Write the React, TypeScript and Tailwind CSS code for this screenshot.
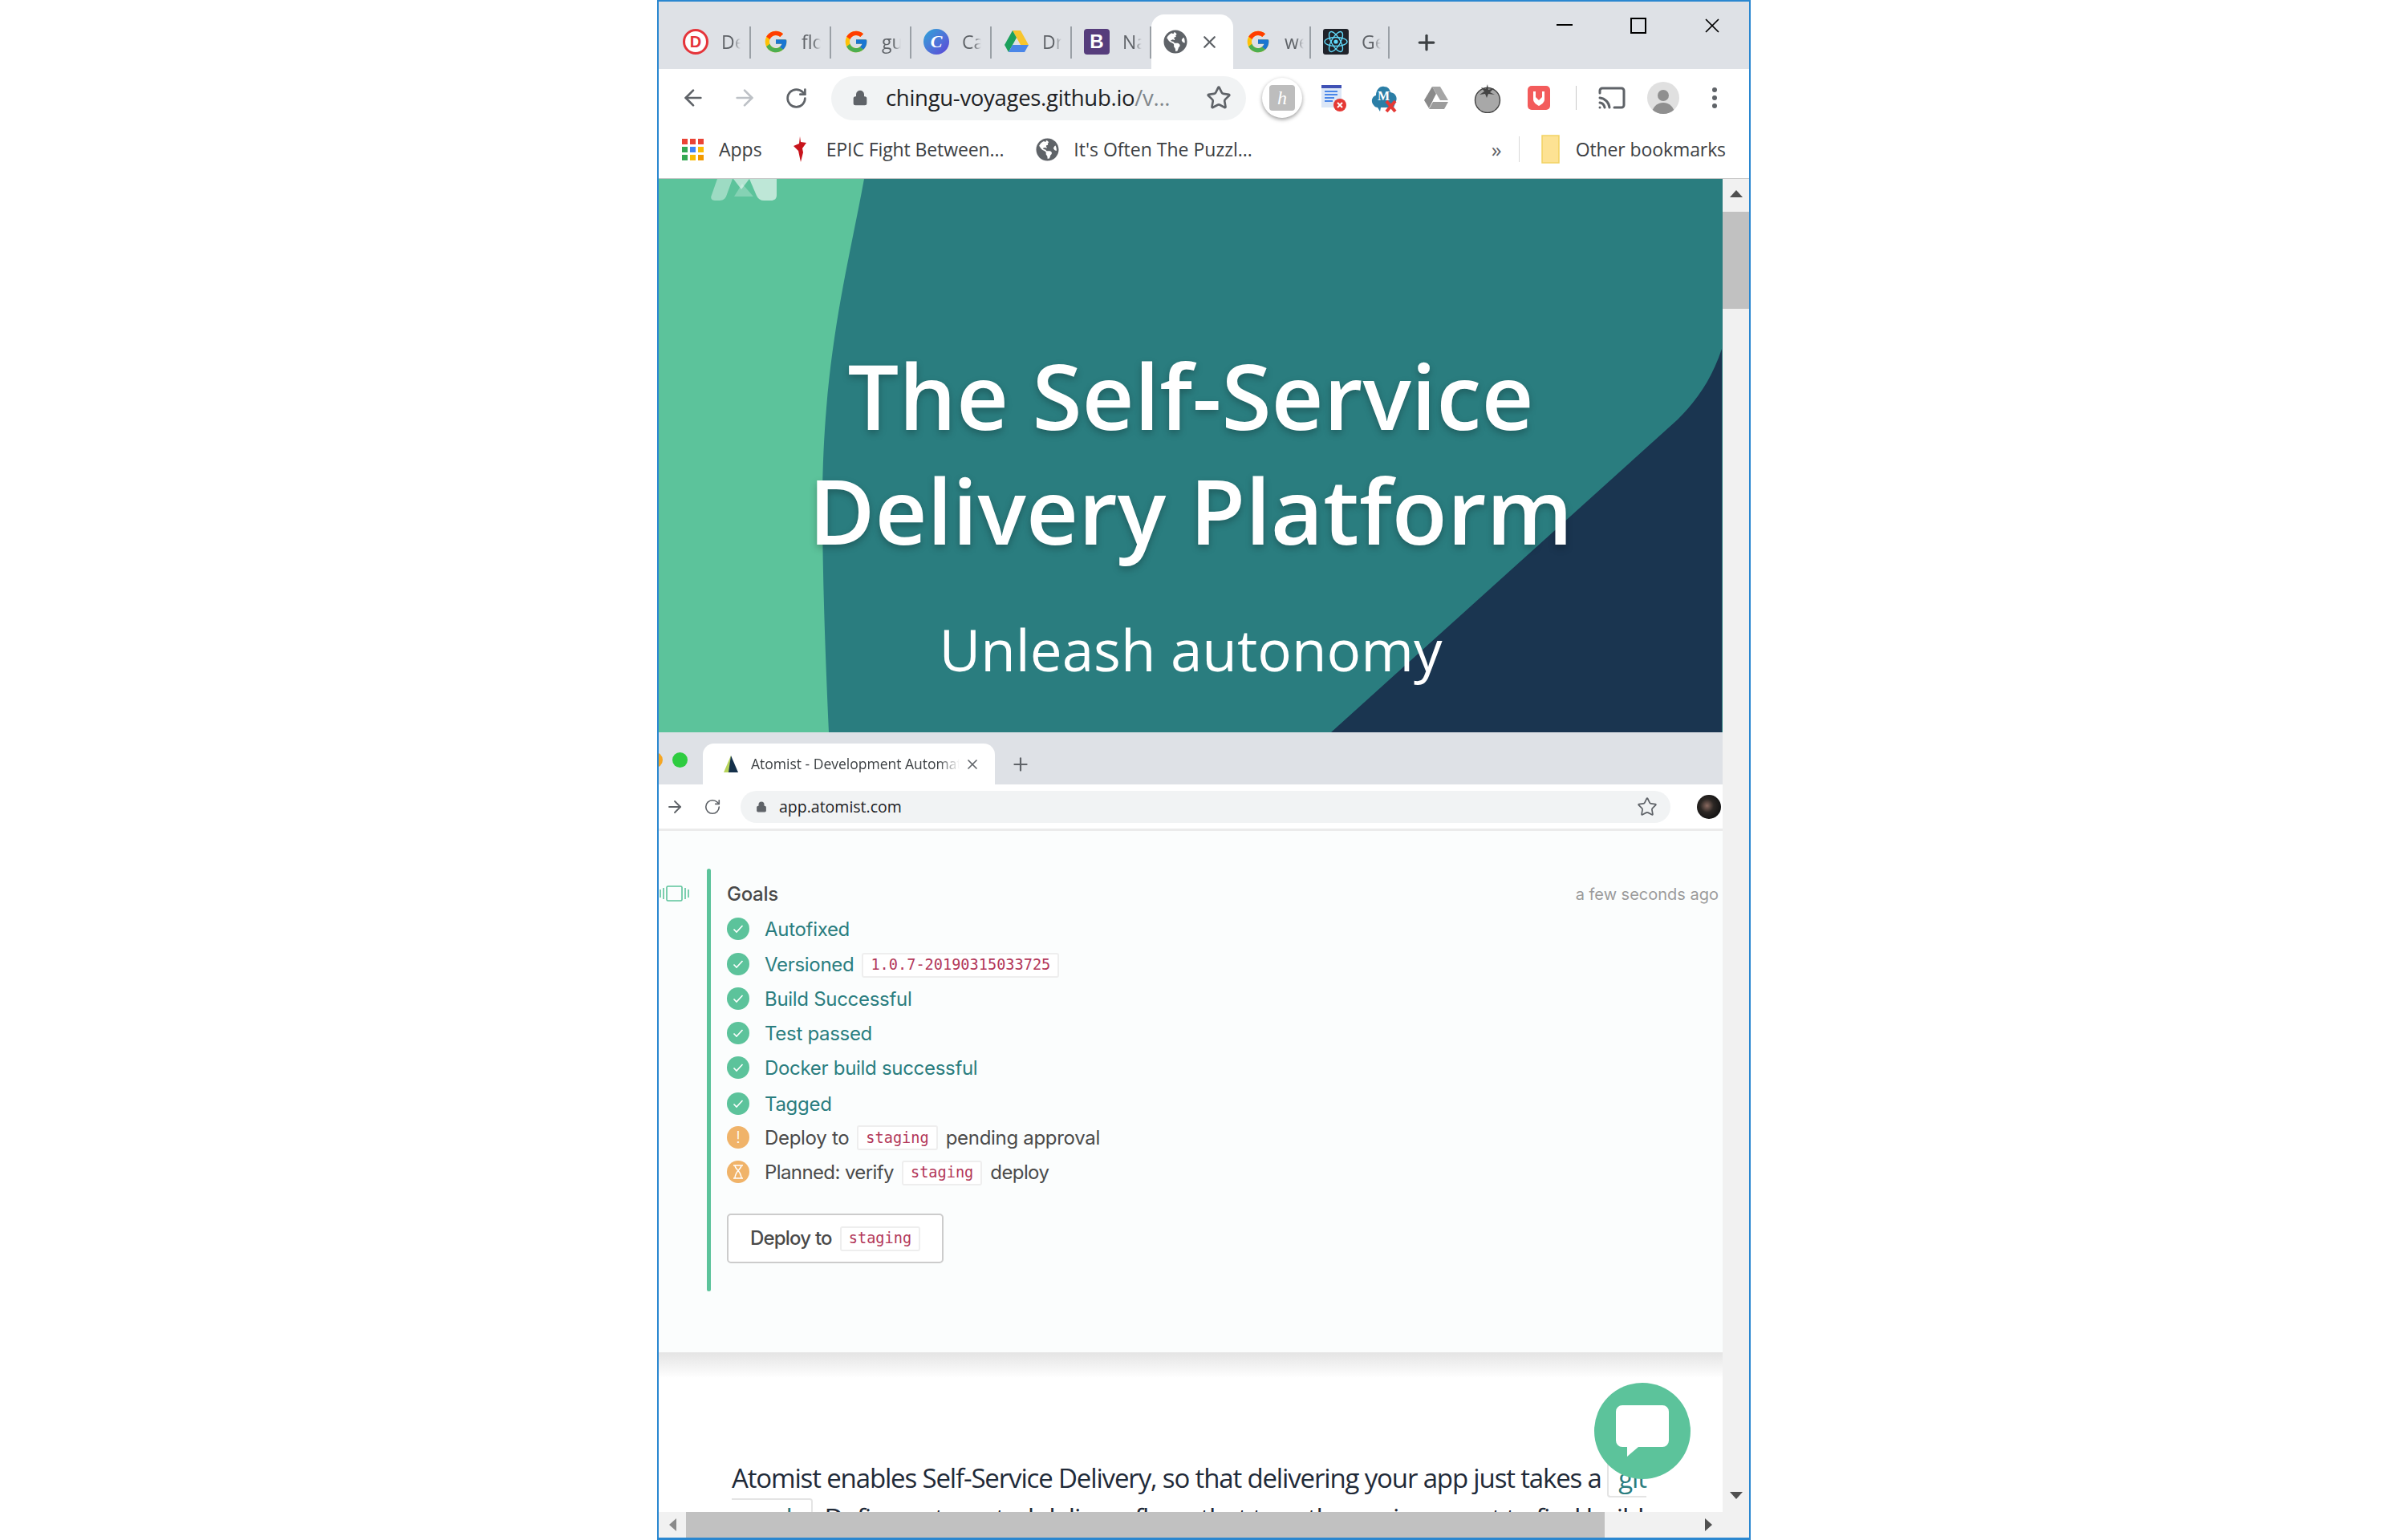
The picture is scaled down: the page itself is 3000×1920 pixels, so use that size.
import { ArrowLeft, ArrowRight, Cast, Lock, Plus, RotateCw, Star, X } from 'lucide-react'
import { FaGlobeAmericas } from 'react-icons/fa'
import { FcGoogle } from 'react-icons/fc'

function Drive({ size = 32 }: { size?: number }) {
    return (
        <svg width={size} height={size} viewBox="0 0 32 32">
            <path d="M11 2h10l10 18H21z" fill="#f7c52d" />
            <path d="M11 2l5 9-10 18-5-9z" fill="#1ba05b" />
            <path d="M6 29l5-9h20l-5 9z" fill="#4a86e8" />
        </svg>
    )
}

function ReactIcon() {
    return (
        <svg width="32" height="32" viewBox="0 0 32 32">
            <rect width="32" height="32" rx="3" fill="#20232a" />
            <g fill="none" stroke="#61dafb" strokeWidth="1.4">
                <ellipse cx="16" cy="16" rx="14" ry="5.5" />
                <ellipse cx="16" cy="16" rx="14" ry="5.5" transform="rotate(60 16 16)" />
                <ellipse cx="16" cy="16" rx="14" ry="5.5" transform="rotate(120 16 16)" />
            </g>
            <circle cx="16" cy="16" r="2.6" fill="#61dafb" />
        </svg>
    )
}

function DealIcon() {
    return (
        <div className="flex h-8 w-8 items-center justify-center rounded-full border-[3px] border-[#e5343a] bg-white font-['Liberation_Sans',sans-serif] text-[20px] font-bold leading-none text-[#e5343a]">
            D
        </div>
    )
}

function CanvaIcon() {
    return (
        <div className="flex h-8 w-8 items-center justify-center rounded-full bg-gradient-to-br from-[#20a4d8] to-[#5a3fd6] font-['Liberation_Serif',serif] text-[22px] font-bold italic leading-none text-white">
            C
        </div>
    )
}

function BootstrapIcon() {
    return (
        <div className="flex h-8 w-8 items-center justify-center rounded-[4px] bg-[#563d7c] font-['Liberation_Sans',sans-serif] text-[24px] font-bold leading-none text-white">
            B
        </div>
    )
}

const tabs = [
    { icon: <DealIcon />, label: 'Deal', w: 'w-[100px]', gap: 'ml-[16px]' },
    { icon: <FcGoogle size={32} />, label: 'flow', w: 'w-[100px]', gap: 'ml-[16px]' },
    { icon: <FcGoogle size={32} />, label: 'guide', w: 'w-[100px]', gap: 'ml-[16px]' },
    { icon: <CanvaIcon />, label: 'Canva', w: 'w-[100px]', gap: 'ml-[16px]' },
    { icon: <Drive />, label: 'Drive', w: 'w-[100px]', gap: 'ml-[16px]' },
    { icon: <BootstrapIcon />, label: 'Navbar', w: 'w-[99px]', gap: 'ml-[16px]' },
]

function Tab({ icon, label, w, gap }: { icon: React.ReactNode; label: string; w: string; gap: string }) {
    return (
        <div className={`flex h-full shrink-0 items-center pl-[15px] ${w} relative`}>
            {icon}
            <span className={`${gap} w-[24px] overflow-hidden whitespace-nowrap text-[23px] text-[#5f6368] [mask-image:linear-gradient(to_right,black_60%,transparent)]`}>{label}</span>
            <div className="absolute right-0 top-[15px] h-[40px] w-[2px] bg-[#9aa0a6]" />
        </div>
    )
}

function Slot({ children }: { children: React.ReactNode }) {
    return <div className="flex h-full w-[64px] shrink-0 items-center justify-center">{children}</div>
}

function Code({ children }: { children: React.ReactNode }) {
    return (
        <code className="mx-[10px] inline-flex h-[31px] items-center rounded-[3px] border-2 border-[#eeeeee] bg-white px-[9px] font-['DejaVu_Sans_Mono',monospace] text-[18.6px] font-normal tracking-normal text-[#b3385a]">
            {children}
        </code>
    )
}

function Status({ kind }: { kind: 'ok' | 'warn' | 'wait' }) {
    const bg = kind === 'ok' ? 'bg-[#5cc39b]' : 'bg-[#f0b369]'
    return (
        <div className={`mr-[19px] flex h-[28px] w-[28px] shrink-0 -translate-y-[1px] items-center justify-center rounded-full text-white ${bg}`}>
            {kind === 'ok' && (
                <svg width="16" height="16" viewBox="0 0 16 16" fill="none" stroke="white" strokeWidth="1.6">
                    <path d="M2.5 8.5l3.5 3.5 7.5-8" />
                </svg>
            )}
            {kind === 'warn' && <span className="text-[20px] font-light leading-none">!</span>}
            {kind === 'wait' && (
                <svg width="14" height="18" viewBox="0 0 14 18" fill="none" stroke="white" strokeWidth="1.5">
                    <path d="M1 1h12M1 17h12M3 1c0 5 8 7 8 16M11 1c0 5-8 7-8 16" />
                </svg>
            )}
        </div>
    )
}

const goals = [
    { h: 'h-[44px]', label: 'Autofixed' },
    { h: 'h-[44px]', label: 'Versioned', code: '1.0.7-20190315033725' },
    { h: 'h-[42px]', label: 'Build Successful' },
    { h: 'h-[44px]', label: 'Test passed' },
    { h: 'h-[42px]', label: 'Docker build successful' },
    { h: 'h-[48px]', label: 'Tagged' },
]

export default function App() {
    return (
        <div className="h-[1920px] w-[3000px] overflow-hidden bg-white">
            <div className="relative ml-[819px] flex h-[1920px] w-[1363px] flex-col border-x-[2.5px] border-b-[3px] border-t-[2px] border-[#2a87d0] font-['Open_Sans',sans-serif]">
                {/* tab strip */}
                <div className="flex h-[84px] shrink-0 bg-[#dee1e6] pt-[16px]">
                    <div className="flex h-[68px] pl-[15px]">
                        {tabs.map((t, i) => (
                            <Tab key={i} {...t} />
                        ))}
                        <div className="flex h-full w-[102px] shrink-0 items-center rounded-t-[16px] bg-white pl-[15px] text-[#5f6368]">
                            <FaGlobeAmericas size={30} />
                            <X className="ml-[15px]" size={25} strokeWidth={2.2} />
                        </div>
                        <Tab icon={<FcGoogle size={32} />} label="web" w="w-[97px]" gap="ml-[17px]" />
                        <Tab icon={<ReactIcon />} label="Getting" w="w-[98px]" gap="ml-[16px]" />
                        <Plus className="ml-[31px] mt-[20px] text-[#3c4043]" size={30} strokeWidth={2.6} />
                    </div>
                    <div className="ml-auto flex h-[30px] -translate-y-[16px] items-start text-black">
                        <div className="mt-[28px] h-[2px] w-[20px] bg-black" />
                        <div className="ml-[72px] mt-[20px] h-[20px] w-[20px] border-2 border-black" />
                        <X className="ml-[67px] mr-[31px] mt-[15px]" size={30} strokeWidth={1.4} />
                    </div>
                </div>

                {/* toolbar */}
                <div className="flex h-[72px] shrink-0 items-center bg-white pl-[11px]">
                    <Slot><ArrowLeft size={32} strokeWidth={2} className="text-[#5f6368]" /></Slot>
                    <Slot><ArrowRight size={32} strokeWidth={2} className="text-[#bdc1c6]" /></Slot>
                    <Slot><RotateCw size={29} strokeWidth={2.2} className="text-[#5f6368]" /></Slot>
                    <div className="ml-[12px] flex h-[55px] w-[517px] shrink-0 items-center rounded-full bg-[#f1f3f4] pl-[26px]">
                        <Lock size={20} fill="#5f6368" className="text-[#5f6368]" />
                        <span className="ml-[22px] whitespace-nowrap text-[27.5px] tracking-[-0.3px] text-[#202124]">chingu-voyages.github.io<span className="text-[#80868b]">/v...</span></span>
                        <Star className="ml-auto mr-[18px] text-[#5f6368]" size={32} strokeWidth={2} />
                    </div>
                    <div className="ml-[13px] flex h-full">
                        <Slot>
                            <div className="flex h-[50px] w-[50px] items-center justify-center rounded-full bg-white shadow-[0_2px_5px_rgba(0,0,0,0.4)]">
                                <div className="flex h-[32px] w-[32px] items-center justify-center rounded-[4px] bg-[#bdbdbd] font-['Liberation_Serif',serif] text-[24px] italic leading-none text-white">h</div>
                            </div>
                        </Slot>
                        <Slot>
                            <svg width="32" height="36" viewBox="0 0 32 36">
                                <path d="M1 2h25v28H1z" fill="#dce7f7" />
                                <path d="M1 2h25v4H1z" fill="#3f51b5" />
                                <path d="M5 10h16M5 14h16M5 18h12M5 22h10" stroke="#4a86e8" strokeWidth="2" />
                                <circle cx="24" cy="27" r="8" fill="#e53935" />
                                <path d="M21 24l6 6M27 24l-6 6" stroke="white" strokeWidth="2" />
                            </svg>
                        </Slot>
                        <Slot>
                            <svg width="34" height="42" viewBox="0 0 34 42">
                                <path d="M3 30c-4-4-2-11 3-12 0-7 5-12 10-11 5 0 7 3 8 7 6 1 9 6 7 11l-3 8H12l-1 5-3-5c-2 0-4-1-5-3z" fill="#2b7ea6" />
                                <text x="8" y="24" fill="white" fontSize="16" fontWeight="700" fontFamily="Liberation Serif">M</text>
                                <path d="M19 25l11 13M30 25L19 38" stroke="#e53935" strokeWidth="4" />
                            </svg>
                        </Slot>
                        <Slot>
                            <svg width="32" height="30" viewBox="0 0 32 30">
                                <path d="M11 1h10l10 17H21z" fill="#a5a5a5" />
                                <path d="M11 1l5 9-9 18-6-10z" fill="#8a8a8a" />
                                <path d="M7 29l5-9h19l-5 9z" fill="#9c9c9c" />
                                <path d="M16 11l4 7h-8z" fill="#fff" />
                            </svg>
                        </Slot>
                        <Slot>
                            <svg width="34" height="38" viewBox="0 0 34 38">
                                <circle cx="17" cy="22" r="15.5" fill="#a8a8a8" stroke="#444" strokeWidth="1.4" />
                                <path d="M17 2l1 7 7-2-5 5 6 3-8-1-2 5-2-5-7 1 6-4-4-5 6 2z" fill="#444" />
                            </svg>
                        </Slot>
                        <Slot>
                            <svg width="28" height="30" viewBox="0 0 28 30">
                                <rect width="28" height="30" rx="5" fill="#f35b5b" />
                                <path d="M7 7h14v10c0 3-3 6-7 8-4-2-7-5-7-8z" fill="#fff" />
                                <path d="M10 7h8v7l-4 4-4-4z" fill="#f35b5b" />
                            </svg>
                        </Slot>
                    </div>
                    <div className="ml-[14px] h-[30px] w-[1px] bg-[#c8c8c8]" />
                    <div className="ml-[12px] flex h-full">
                        <Slot><Cast size={36} strokeWidth={2} className="text-[#5f6368]" /></Slot>
                        <Slot>
                            <div className="flex h-[40px] w-[40px] flex-col items-center justify-end overflow-hidden rounded-full bg-[#e0e0e0]">
                                <div className="h-[14px] w-[14px] rounded-full bg-[#8f8f8f]" />
                                <div className="mt-[2px] h-[14px] w-[28px] rounded-t-full bg-[#8f8f8f]" />
                            </div>
                        </Slot>
                        <Slot>
                            <div className="flex flex-col gap-[4px]">
                                <div className="h-[6px] w-[6px] rounded-full bg-[#5f6368]" />
                                <div className="h-[6px] w-[6px] rounded-full bg-[#5f6368]" />
                                <div className="h-[6px] w-[6px] rounded-full bg-[#5f6368]" />
                            </div>
                        </Slot>
                    </div>
                </div>

                {/* bookmarks */}
                <div className="flex h-[65px] shrink-0 items-start border-b border-[#c8c8c8] bg-white pl-[29px] text-[23px] text-[#3c4043]">
                    <div className="flex h-[56px] w-full items-center">
                        <div className="grid w-[27px] grid-cols-3 gap-[3px]">
                            <div className="h-[7px] bg-[#ea4335]" /><div className="h-[7px] bg-[#ea4335]" /><div className="h-[7px] bg-[#ea4335]" />
                            <div className="h-[7px] bg-[#34a853]" /><div className="h-[7px] bg-[#4285f4]" /><div className="h-[7px] bg-[#fbbc05]" />
                            <div className="h-[7px] bg-[#34a853]" /><div className="h-[7px] bg-[#fbbc05]" /><div className="h-[7px] bg-[#f29900]" />
                        </div>
                        <span className="ml-[19px]">Apps</span>
                        <svg className="ml-[38px]" width="18" height="32" viewBox="0 0 18 32">
                            <path d="M9 0l1 7 7 1-5 7 1 5-3 12-3-14-6-6 7-3z" fill="#c8141c" />
                        </svg>
                        <span className="ml-[24px] whitespace-nowrap tracking-[-0.1px]">EPIC Fight Between...</span>
                        <FaGlobeAmericas className="ml-[40px] text-[#5f6368]" size={29} />
                        <span className="ml-[18px] whitespace-nowrap">It's Often The Puzzl...</span>
                        <span className="ml-auto text-[26px] leading-none text-[#5f6368]">»</span>
                        <div className="ml-[21px] h-[32px] w-[1px] bg-[#d8d8d8]" />
                        <svg className="ml-[27px]" width="24" height="36" viewBox="0 0 24 36">
                            <path d="M1 1h21v34H1z" fill="#fde293" stroke="#f2d263" strokeWidth="1.5" />
                        </svg>
                        <span className="ml-[19px] mr-[29px] whitespace-nowrap tracking-[-0.1px]">Other bookmarks</span>
                    </div>
                </div>

                <div className="flex min-h-0 flex-1">
                    {/* page */}
                    <div className="min-w-0 flex-1 overflow-hidden bg-white">
                        {/* hero */}
                        <div className="relative flex h-[690px] flex-col items-center bg-[#2a7d7f] text-white">
                            <svg className="absolute inset-0" width="1325" height="690" viewBox="0 0 1325 690">
                                <path d="M0 0H256C236 110 205 220 204 400C204 500 208 600 212 690H0Z" fill="#5cc39b" />
                                <path d="M1325 212C1312 250 1295 275 1270 300L838 690H1325Z" fill="#1a3550" />
                                <path d="M73 0H92L84 22C82 26 79 27 75 27H70C66 27 64 24 66 20Z" fill="#ffffff" opacity="0.4" />
                                <path d="M93 0H113L103 13Z" fill="#ffffff" opacity="0.55" />
                                <path d="M94 22L104 6L118 22Z" fill="#ffffff" opacity="0.25" />
                                <path d="M113 0H147V20C147 25 144 27 140 27H131C127 27 124 25 122 21Z" fill="#ffffff" opacity="0.6" />
                            </svg>
                            <h1 className="relative mt-[198px] text-center text-[113px] font-semibold leading-[143px] [text-shadow:0_4px_10px_rgba(0,0,0,0.25)]">
                                The Self-Service<br />Delivery Platform
                            </h1>
                            <p className="relative mt-[53px] text-[71px] leading-[100px]">Unleash autonomy</p>
                        </div>

                        {/* embedded screenshot */}
                        <div className="flex h-[773px] flex-col bg-[#fbfdfd] font-['Inter',sans-serif]">
                            <div className="flex h-[65px] shrink-0 bg-[#dee1e6] pt-[14px]">
                                <div className="-ml-[14px] mt-[11px] h-[19px] w-[19px] rounded-full bg-[#f5a623]" />
                                <div className="ml-[12px] mt-[11px] h-[19px] w-[19px] rounded-full bg-[#2ecc40]" />
                                <div className="ml-[19px] flex h-[51px] w-[364px] items-center rounded-t-[14px] bg-white pl-[25px] text-[#5f6368]">
                                    <svg width="20" height="24" viewBox="0 0 20 24">
                                        <path d="M10 1L1 22h8z" fill="#b7d45b" />
                                        <path d="M10 1l9 21h-12z" fill="#14304a" />
                                    </svg>
                                    <span className="ml-[15px] w-[260px] overflow-hidden whitespace-nowrap font-['Open_Sans',sans-serif] text-[17.5px] text-[#3c4043] [mask-image:linear-gradient(to_right,black_90%,transparent)]">Atomist - Development Automation</span>
                                    <X className="ml-[6px]" size={20} strokeWidth={2} />
                                </div>
                                <Plus className="ml-[19px] mt-[13px] text-[#5f6368]" size={26} strokeWidth={2} />
                            </div>
                            <div className="flex h-[58px] shrink-0 items-start border-b-[3px] border-[#ebebeb] bg-white pt-[8px]">
                                <ArrowRight className="ml-[8px] mt-[8px] text-[#5f6368]" size={24} strokeWidth={1.8} />
                                <RotateCw className="ml-[24px] mt-[9px] text-[#5f6368]" size={22} strokeWidth={1.8} />
                                <div className="ml-[24px] flex h-[40px] w-[1159px] items-center rounded-full bg-[#f1f3f4] pl-[19px]">
                                    <Lock size={14} fill="#5f6368" className="text-[#5f6368]" />
                                    <span className="ml-[15px] font-['Open_Sans',sans-serif] text-[19.5px] text-[#202124]">app.atomist.com</span>
                                    <Star className="ml-auto mr-[16px] text-[#5f6368]" size={26} strokeWidth={1.6} />
                                </div>
                                <div className="ml-[33px] mt-[5px] h-[30px] w-[30px] rounded-full bg-[radial-gradient(circle_at_42%_45%,#8a6a60_0%,#2c2724_35%,#141414_70%)]" />
                            </div>
                            <div className="flex flex-1 pt-[47px]">
                                <div className="flex w-[60px] shrink-0 justify-start pt-[21px]">
                                    <svg width="42" height="20" viewBox="0 0 42 20" fill="none" stroke="#5cc39b" strokeWidth="1.6">
                                        <rect x="10" y="1" width="19" height="18" rx="1.5" />
                                        <path d="M2 5v10M6 3v14M33 3v14M37 5v10" />
                                    </svg>
                                </div>
                                <div className="h-[527px] w-[5px] shrink-0 rounded-full bg-[#5cc39b]" />
                                <div className="ml-[20px] flex-1 text-[24px] tracking-[-0.3px]">
                                    <div className="mt-[10px] flex h-[44px] items-center justify-between pr-[5px]">
                                        <span className="font-medium text-[#4a4a4a]">Goals</span>
                                        <span className="text-[20px] tracking-normal text-[#9b9b9b]">a few seconds ago</span>
                                    </div>
                                    {goals.map((g) => (
                                        <div key={g.label} className={`flex items-center text-[#2a7d7f] ${g.h}`}>
                                            <Status kind="ok" />
                                            {g.label}
                                            {g.code && <Code>{g.code}</Code>}
                                        </div>
                                    ))}
                                    <div className="flex h-[35px] items-center text-[#4a4a4a]">
                                        <Status kind="warn" />
                                        Deploy to<Code>staging</Code>pending approval
                                    </div>
                                    <div className="flex h-[52px] items-center tracking-[-0.6px] text-[#4a4a4a]">
                                        <Status kind="wait" />
                                        Planned: verify<Code>staging</Code>deploy
                                    </div>
                                    <button className="mt-[25px] flex h-[62px] w-[270px] items-center rounded-[5px] border-2 border-[#cccccc] bg-white pl-[27px] font-medium tracking-[-0.8px] text-[#4a4a4a]">
                                        Deploy to<Code>staging</Code>
                                    </button>
                                </div>
                            </div>
                        </div>

                        <div className="h-[32px] bg-gradient-to-b from-[#e4e4e4] to-white" />

                        {/* intro paragraph */}
                        <p className="ml-[91px] mt-[100px] w-[1155px] text-[33px] font-normal leading-[50px] tracking-[-1.15px] text-[#1f2a38]">
                            Atomist enables Self-Service Delivery, so that delivering your app just takes a{' '}
                            <span className="rounded-[4px] border-2 border-[#e4e4e4] px-[12px] text-[#2a7d7f]">git &nbsp;&nbsp;push</span>. Define automated delivery flows that turn the environment to find build test
                        </p>
                    </div>

                    {/* vertical scrollbar */}
                    <div className="flex w-[33px] shrink-0 flex-col items-center justify-between bg-[#f1f1f1] pb-[16px] pt-[14px]">
                        <div className="h-0 w-0 border-x-[8px] border-b-[9px] border-x-transparent border-b-[#505050]" />
                        <div className="absolute right-0 top-[262px] h-[121px] w-[33px] bg-[#c1c1c1]" />
                        <div className="h-0 w-0 border-x-[8px] border-t-[9px] border-x-transparent border-t-[#505050]" />
                    </div>
                </div>

                {/* horizontal scrollbar */}
                <div className="flex h-[32px] shrink-0 items-center bg-[#f1f1f1]">
                    <div className="flex w-[34px] justify-center">
                        <div className="h-0 w-0 border-y-[8px] border-r-[9px] border-y-transparent border-r-[#8a8a8a]" />
                    </div>
                    <div className="h-full w-[1145px] bg-[#c1c1c1]" />
                    <div className="ml-[125px] h-0 w-0 border-y-[8px] border-l-[9px] border-y-transparent border-l-[#505050]" />
                </div>

                {/* chat button */}
                <div className="absolute left-[1165.5px] top-[1722px] flex h-[120px] w-[120px] items-center justify-center rounded-full bg-[#5cc39b]">
                    <svg width="66" height="64" viewBox="0 0 66 64">
                        <path d="M8 0h50a8 8 0 0 1 8 8v36a8 8 0 0 1-8 8H28L14 64V52H8a8 8 0 0 1-8-8V8a8 8 0 0 1 8-8z" fill="white" />
                    </svg>
                </div>
            </div>
        </div>
    )
}
